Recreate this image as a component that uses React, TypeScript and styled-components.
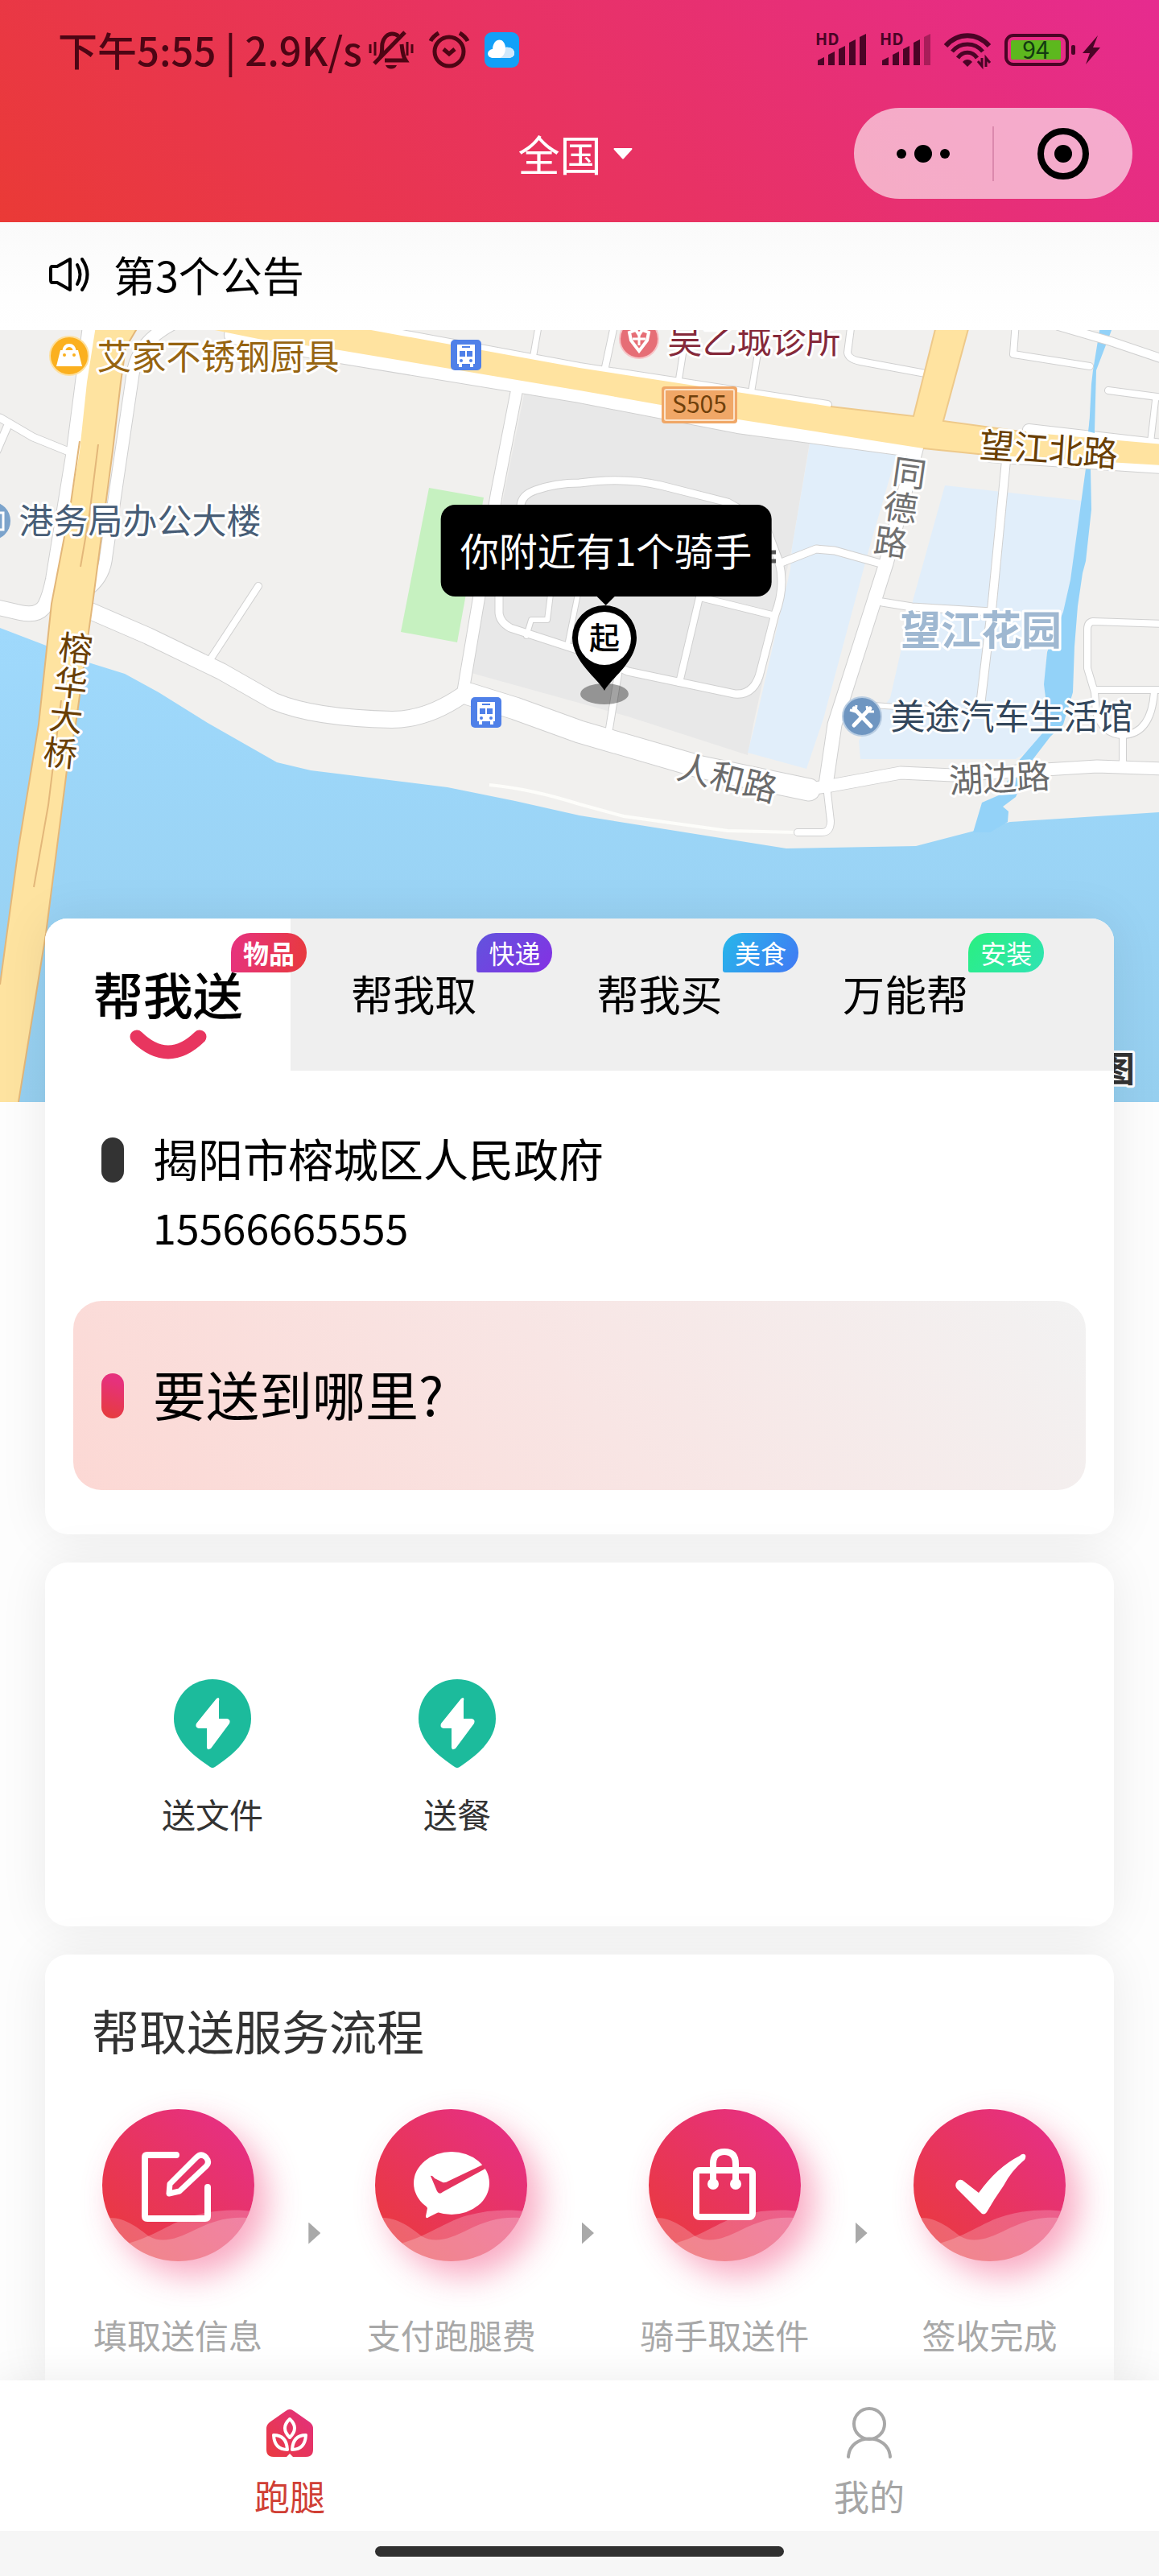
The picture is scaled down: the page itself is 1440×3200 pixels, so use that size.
import React, { useState } from "react";
import styled, { createGlobalStyle, css } from "styled-components";

const GlobalStyle = createGlobalStyle`
  *, *::before, *::after { box-sizing: border-box; }
  body {
    margin: 0;
    background: #fdfdfd;
    color: #000;
    font-family: "Noto Sans CJK SC", "Noto Sans", sans-serif;
  }
  button {
    margin: 0;
    padding: 0;
    border: 0;
    background: none;
    color: inherit;
    font: inherit;
    cursor: pointer;
  }
  h1, h2, p, ol, ul { margin: 0; padding: 0; list-style: none; font-weight: 400; }
  svg { display: block; flex: none; overflow: visible; }
`;

const brand = "linear-gradient(45deg, #ea3a36, #e62b8f)";

const Page = styled.div`
  display: flex;
  flex-direction: column;
  min-height: 100vh;
`;

/* ---------- header ---------- */

const Header = styled.header`
  background: ${brand};
`;

const StatusBar = styled.div`
  display: flex;
  align-items: center;
  justify-content: space-between;
  height: 124px;
  padding: 0 72px;
  color: #4d0514;
`;

const StatusGroup = styled.div<{ $gap: number }>`
  display: flex;
  align-items: center;
  gap: ${(p) => p.$gap}px;
`;

const Clock = styled.span`
  padding-bottom: 2px;
  font-size: 49px;
  line-height: 64px;
  font-weight: 500;
  white-space: nowrap;
`;

const TitleBar = styled.div`
  display: grid;
  grid-template-columns: 1fr auto 1fr;
  align-items: center;
  padding: 10px 33px 29px 22px;
`;

const CityButton = styled.button`
  grid-column: 2;
  display: flex;
  align-items: center;
  gap: 14px;
  color: #fff;
  font-size: 52px;
  line-height: 64px;
`;

const Capsule = styled.div`
  justify-self: end;
  display: flex;
  align-items: center;
  width: 346px;
  height: 113px;
  border-radius: 57px;
  background: rgba(255, 255, 255, 0.6);
`;

const CapsuleButton = styled.button`
  flex: 1;
  display: flex;
  justify-content: center;

  & + & {
    border-left: 2px solid rgba(160, 60, 110, 0.3);
    padding: 2px 0;
  }
`;

const Notice = styled.section`
  display: flex;
  align-items: center;
  gap: 26px;
  height: 134px;
  padding: 0 60px 4px;
  background: linear-gradient(#fafafa, #fefefe 70%, #fff);
  font-size: 52px;
  line-height: 64px;
`;

/* ---------- map ---------- */

const MapArea = styled.section`
  position: relative;
  height: 959px;
  overflow: hidden;
  background: #9ad5f9;

  & > svg {
    width: 100%;
    height: 100%;
    overflow: hidden;
  }
`;

const RiderTip = styled.div`
  position: absolute;
  left: calc(50% + 33px);
  top: 217px;
  transform: translateX(-50%);
  padding: 22px 24px 26px;
  border-radius: 18px;
  background: #000;
  color: #fff;
  font-size: 48px;
  line-height: 66px;
  white-space: nowrap;

  &::after {
    content: "";
    position: absolute;
    left: 50%;
    top: 100%;
    margin-left: -11px;
    border: 11px solid transparent;
    border-top-color: #000;
    border-bottom: 0;
  }
`;

/* ---------- cards ---------- */

const Content = styled.main`
  position: relative;
  flex: 1;
  display: flex;
  flex-direction: column;
  gap: 35px;
  margin-top: -228px;
  padding: 0 56px;
`;

const Card = styled.section<{ $grow?: boolean }>`
  border-radius: 28px;
  background: #fff;
  box-shadow: 0 0 60px rgba(0, 0, 0, 0.08);
  ${(p) =>
    p.$grow &&
    css`
      flex: 1;
      border-radius: 28px 28px 0 0;
    `}
`;

const Tabs = styled.div`
  display: flex;
  height: 189px;
  border-radius: 28px 28px 0 0;
  background: #efefef;
`;

const Tab = styled.button<{ $active: boolean }>`
  position: relative;
  flex: 0 0 23%;
  padding-bottom: 4px;
  font-size: ${(p) => (p.$active ? 62 : 52)}px;
  font-weight: ${(p) => (p.$active ? 500 : 400)};
  background: ${(p) => (p.$active ? "#fff" : "transparent")};

  &:first-child {
    border-top-left-radius: 28px;
  }
`;

const Badge = styled.span<{ $fill: string; $strong: boolean }>`
  position: absolute;
  left: 231px;
  top: 18px;
  z-index: 1;
  padding: 0 15px;
  border-radius: 24px 24px 24px 3px;
  background: ${(p) => p.$fill};
  color: #fff;
  font-size: 32px;
  line-height: 49px;
  font-weight: ${(p) => (p.$strong ? 700 : 400)};
  white-space: nowrap;
`;

const Smile = styled.svg`
  position: absolute;
  left: 50%;
  bottom: 14px;
  margin-left: -48px;
`;

const Addresses = styled.div`
  padding: 72px 35px 55px;
`;

const AddressRow = styled.div`
  display: grid;
  grid-template-columns: 28px 1fr;
  column-gap: 36px;
  align-items: center;
  padding: 0 35px;
`;

const Marker = styled.i<{ $fill: string }>`
  height: 56px;
  border-radius: 14px;
  background: ${(p) => p.$fill};
`;

const Place = styled.p`
  padding-bottom: 6px;
  font-size: 56px;
  line-height: 72px;
`;

const Phone = styled.p`
  grid-column: 2;
  margin-top: 12px;
  font-size: 52px;
  line-height: 64px;
`;

const Destination = styled.button`
  display: grid;
  grid-template-columns: 28px 1fr;
  column-gap: 36px;
  align-items: center;
  width: 100%;
  height: 235px;
  margin-top: 60px;
  padding: 0 35px;
  border-radius: 35px;
  background: linear-gradient(50deg, #fcd8d4, #f8e5e4 50%, #f2f2f2);
  font-size: 66px;
  line-height: 80px;
  text-align: left;
`;

const Question = styled.span`
  padding-bottom: 8px;
`;

const Services = styled.ul`
  display: grid;
  grid-template-columns: repeat(4, 1fr);
  padding: 145px 56px 112px;
`;

const ServiceButton = styled.button`
  display: flex;
  flex-direction: column;
  align-items: center;
  gap: 29px;
  width: 100%;
  color: #333;
  font-size: 42px;
  line-height: 56px;
`;

const FlowTitle = styled.h2`
  padding: 54px 58px 0;
  color: #333;
  font-size: 59px;
  line-height: 80px;
`;

const Steps = styled.ol`
  display: flex;
  align-items: center;
  justify-content: space-between;
  padding: 58px 60px 29px;
`;

const Step = styled.li`
  display: flex;
  flex-direction: column;
  align-items: center;
  gap: 63px;
  color: #a8a8a8;
  font-size: 42px;
  line-height: 56px;
`;

const StepDisc = styled.div`
  width: 189px;
  height: 189px;
  overflow: hidden;
  border-radius: 50%;
  background: linear-gradient(45deg, #ea3a3a 5%, #e63080 85%);
  box-shadow: 16px 18px 40px rgba(240, 50, 110, 0.42);
`;

const StepArrow = styled.li`
  width: 15px;
  height: 27px;
  background: #a9a9a9;
  clip-path: polygon(0 0, 100% 50%, 0 100%);
`;

/* ---------- bottom bar ---------- */

const BottomNav = styled.nav`
  position: relative;
  display: flex;
  background: #fff;
  box-shadow: 0 0 48px rgba(0, 0, 0, 0.08);
`;

const NavLink = styled.a<{ $active?: boolean }>`
  flex: 1;
  display: flex;
  flex-direction: column;
  align-items: center;
  gap: 18px;
  padding: 33px 0 16px;
  color: ${(p) => (p.$active ? "#d03f35" : "#a5a5a5")};
  font-size: 44px;
  line-height: 56px;
  text-decoration: none;
`;

const HomeArea = styled.div`
  position: relative;
  display: flex;
  justify-content: center;
  height: 56px;
  padding-top: 19px;
  background: #f6f6f6;
`;

const HomeBar = styled.div`
  width: 508px;
  height: 13px;
  border-radius: 7px;
  background: #303030;
`;

/* ---------- status icons ---------- */

const BellOff = () => (
  <svg width="56" height="48" viewBox="0 0 56 48" fill="none" stroke="currentColor" strokeWidth="4">
    <path d="M14 33C18 29 16 22 17 16C19 8 24 4 29 4C32 4 35 5 37 7" strokeWidth="5" />
    <path d="M41 17C42 24 42 31 46 37H20" strokeWidth="5" />
    <path d="M45 2L7 41" strokeWidth="5" />
    <path d="M2 17V28M8 14V31M48 14V31M54 17V28" strokeWidth="3" />
    <path d="M21 43H35C33 49 23 49 21 43Z" fill="currentColor" stroke="none" />
  </svg>
);

const Alarm = () => (
  <svg width="50" height="47" viewBox="0 0 50 47" fill="none" stroke="currentColor" strokeWidth="5">
    <circle cx="25" cy="25" r="18" />
    <path d="M2 12C4 8 7 5 12 2M48 12C46 8 43 5 38 2" />
    <path d="M18 22L25 28L32 22" />
  </svg>
);

const CloudApp = () => (
  <svg width="43" height="44" viewBox="0 0 43 44">
    <rect width="43" height="44" rx="9" fill="#12a0f8" />
    <path d="M11 32C2 32 2 22 10 21C11 6 25 6 26 19C39 17 41 32 30 32Z" fill="#fff" />
    <path d="M26 19C39 17 41 32 30 32H19C24 30 26 25 26 19Z" fill="#cfe8fb" />
  </svg>
);

const Signal = ({ weak }: { weak?: boolean }) => (
  <svg width="63" height="44" viewBox="0 0 63 44" fill="#4a0426">
    <text x="0" y="16" fontSize="20" fontWeight="700">HD</text>
    <path d="M3 41V35L11 31V41Z" />
    <path d="M16 41V28L24 24V41Z" />
    <path d="M29 41V21L37 17V41Z" />
    <path d="M42 41V13L50 9V41Z" />
    <path d="M55 41V6L63 2V41Z" opacity={weak ? 0.4 : 1} />
  </svg>
);

const Wifi = () => (
  <svg width="58" height="44" viewBox="0 0 58 44" fill="none" stroke="#4a0426" strokeWidth="5">
    <path d="M2 17C17 0 41 0 56 17" strokeWidth="6" />
    <path d="M10 24C20 12 38 12 48 24" />
    <path d="M17 32C23 23 35 23 41 32" />
    <path d="M29 43L23 37C26 33 32 33 35 37Z" fill="#4a0426" stroke="none" />
    <path d="M42 36L47 42V32M52 43V32L57 38" strokeWidth="3" />
  </svg>
);

const Battery = () => (
  <svg width="120" height="40" viewBox="0 0 120 40">
    <rect x="2" y="2" width="76" height="36" rx="9" fill="none" stroke="#4a0426" strokeWidth="4" />
    <rect x="8" y="8" width="62" height="24" rx="2" fill="#5db81e" />
    <rect x="83" y="14" width="5" height="12" rx="2" fill="#4a0426" />
    <text x="39" y="31" fontSize="30" textAnchor="middle" fill="#143a12">94</text>
    <path d="M116 2L97 24H106L101 38L119 17H110Z" fill="#4a0426" />
  </svg>
);

const Speaker = () => (
  <svg width="55" height="44" viewBox="0 0 55 44" fill="none" stroke="#000" strokeWidth="4" strokeLinejoin="round" strokeLinecap="round">
    <path d="M27 3V41L11 32H5Q3 32 3 29V15Q3 12 5 12H11Z" />
    <path d="M36 10Q43 22 36 34M42 3Q55 22 42 41" />
  </svg>
);

/* ---------- map drawing ---------- */

type Road = { d: string; w: number };

const roads: Road[] = [
  { d: "M0 519L41 543L83 560", w: 9 },
  { d: "M9 530L-4 560", w: 9 },
  { d: "M-5 754L25 761Q48 766 56 752Q62 740 66 720L92 560L112 405", w: 18 },
  { d: "M215 402Q170 425 165 465L147 587L132 690Q130 715 112 730", w: 15 },
  { d: "M321 728L262 818", w: 8 },
  { d: "M643 480L617 613L574 867", w: 14 },
  { d: "M670 400L663 440", w: 7 },
  { d: "M764 400L752 456", w: 8 },
  { d: "M850 430L843 474", w: 7 },
  { d: "M943 430L933 490", w: 7 },
  { d: "M1058 400L1053 438Q1054 446 1069 449L1150 464", w: 8 },
  { d: "M1262 400L1259 440L1354 455", w: 8 },
  { d: "M1377 485L1445 494", w: 8 },
  { d: "M1436 493L1430 545", w: 7 },
  { d: "M1315 405L1380 424L1445 446", w: 10 },
  { d: "M647 628Q648 615 665 609Q690 600 720 600Q775 592 821 603L904 624L950 650L968 698Q976 730 963 763L945 833Q938 864 913 862L780 834L720 808L634 780Q620 772 620 760V735", w: 9 },
  { d: "M870 742L959 764", w: 8 },
  { d: "M869 742L844 848", w: 8 },
  { d: "M968 700L1014 682L1037 684L1094 700", w: 9 },
  { d: "M684 738L680 770H660L654 790", w: 6 },
  { d: "M718 738L705 802", w: 6 },
  { d: "M768 837L757 905", w: 8 },
  { d: "M1250 572L1232 758L1217 885", w: 10 },
  { d: "M1096 748L1133 754L1232 760", w: 9 },
  { d: "M1070 875L1217 885", w: 6 },
  { d: "M1445 775L1358 772Q1351 773 1351 782V830L1360 860L1362 885Q1370 912 1395 913Q1430 912 1434 860", w: 8 },
  { d: "M1360 857H1445", w: 8 },
  { d: "M1395 913V950", w: 8 },
  { d: "M1028 985L1032 1020Q1032 1034 1021 1034H991", w: 8 },
  { d: "M1140 550L1101 700L1037 900L1026 975", w: 17 },
  { d: "M110 758L184 790L275 834L340 871Q390 892 487 894Q530 894 574 864", w: 20 },
  { d: "M582 862L640 880L720 909L871 953L1005 981", w: 27 },
  { d: "M1000 981L1032 976L1119 960L1184 963L1363 952L1445 955", w: 15 },
  { d: "M290 416L422 440L720 489L917 527L1125 555", w: 22 },
  { d: "M440 404L720 456L1028 503", w: 10 },
  { d: "M1278 534L1445 553", w: 14 },
  { d: "M1230 568L1445 582", w: 12 },
];

const Bus = ({ x, y }: { x: number; y: number }) => (
  <g transform={`translate(${x - 19} ${y - 19})`}>
    <rect width="38" height="38" rx="5" fill="#4f80e8" />
    <path d="M8 6H30V30H28V34H24V30H14V34H10V30H8Z" fill="#fff" />
    <path d="M14 9H24" stroke="#4f80e8" strokeWidth="2" />
    <path d="M11 14H18V21H11ZM20 14H27V21H20Z" fill="#4f80e8" />
    <circle cx="13" cy="26" r="2" fill="#4f80e8" />
    <circle cx="25" cy="26" r="2" fill="#4f80e8" />
  </g>
);

type Label = { t: string; x: number; y: number; c: string; r?: number; s?: number; b?: boolean };

const labels: Label[] = [
  { t: "艾家不锈钢厨具", x: 271, y: 443, c: "#966411", s: 43 },
  { t: "港务局办公大楼", x: 174, y: 647, c: "#475d76", s: 43 },
  { t: "吴乙城诊所", x: 937, y: 423, c: "#85293a", s: 43 },
  { t: "望江北路", x: 1303, y: 558, c: "#6a3f04", r: 4, s: 43 },
  { t: "同", x: 1130, y: 587, c: "#707070", r: 8 },
  { t: "德", x: 1119, y: 630, c: "#707070", r: 8 },
  { t: "路", x: 1107, y: 673, c: "#707070", r: 8 },
  { t: "望江花园", x: 1219, y: 782, c: "#9fb8d1", s: 50, b: true },
  { t: "美途汽车生活馆", x: 1257, y: 890, c: "#33475c", s: 43 },
  { t: "湖边路", x: 1242, y: 966, c: "#6b6b6b", r: -3 },
  { t: "人和路", x: 904, y: 966, c: "#6b6b6b", r: 14 },
  { t: "榕", x: 94, y: 805, c: "#6a3f04", r: 6 },
  { t: "华", x: 88, y: 848, c: "#6a3f04", r: 6 },
  { t: "大", x: 82, y: 891, c: "#6a3f04", r: 6 },
  { t: "桥", x: 75, y: 935, c: "#6a3f04", r: 6 },
  { t: "图", x: 1388, y: 1328, c: "#333", s: 44, b: true },
];

const CityMap = () => (
  <svg viewBox="0 410 1440 959" preserveAspectRatio="xMidYMid slice">
    <defs>
      <linearGradient id="water" x1="0" y1="0" x2="0" y2="1">
        <stop offset="0" stopColor="#9fd9fc" />
        <stop offset="1" stopColor="#96cfef" />
      </linearGradient>
    </defs>
    <rect x="-200" y="410" width="1840" height="959" fill="#f1f0ee" />
    <path d="M-200 780H0L60 803L110 823L155 837L197 860L258 898L344 947L386 957L556 978L640 995L720 1013L977 1054L1138 1051L1211 1032L1255 1021L1440 1009H1640V1369H-200Z" fill="url(#water)" />
    <path d="M652 485L720 500L1007 543L984 680L936 900L929 938L780 890L582 835Z" fill="#e8e8e8" />
    <path d="M1008 540L1116 557L1078 688L1023 893L1002 955L929 935L938 900L982 707L984 680Z" fill="#e1eefa" />
    <path d="M1174 603L1345 622V640L1322 760L1300 810L1297 880L1303 915L1262 943H1069L1067 920L1106 867L1119 810L1135 743Z" fill="#e1eefa" />
    <path d="M533 606L601 618L568 798L498 785Z" fill="#c6f1c0" />
    <path d="M1367 405H1383L1362 460L1360 535L1355 582L1356 633L1349 697L1345 712L1339 753L1335 803L1333 860L1321 900L1305 915L1282 945L1262 990L1246 1002L1253 1008L1252 1021L1230 1034L1209 1034L1220 997L1243 987L1264 947L1296 910L1303 900L1297 850L1301 810L1321 760L1330 720L1342 633L1349 582L1353 535L1356 477L1358 460Z" fill="#93d2f8" />
    <path d="M608 975Q660 980 720 999L775 1014L904 1032L991 1034" fill="none" stroke="#fdfdfa" strokeWidth="4" />
    <g fill="none" stroke="#d0d0d0" strokeLinejoin="round" strokeLinecap="round">
      {roads.map((r) => <path key={r.d} d={r.d} strokeWidth={r.w + 2} />)}
    </g>
    <g fill="none" stroke="#fff" strokeLinejoin="round" strokeLinecap="round">
      {roads.map((r) => <path key={r.d} d={r.d} strokeWidth={r.w} />)}
    </g>
    <path d="M257 408H450L720 457L1032 505L1135 517L1163 405H1204L1172 523L1275 537L1445 552V578L1225 565L1147 557L917 521L821 503L720 485L422 435L321 421Z" fill="#ffe3a0" />
    <path d="M1032 505L1135 517L1163 405M1204 405L1172 523L1275 537M1147 557L1225 565" fill="none" stroke="#eec98a" strokeWidth="2" />
    <path d="M119 405H172L156 432L150 475L140 560L115 750L94 900L83 957L57 1160L23 1369H-20L0 1223L23 1053L48 900L64 750L88 625L99 560L108 475Z" fill="#fee3a0" />
    <path d="M172 405L156 432L150 475L140 560L115 750L94 900L83 957L57 1160L23 1369M0 1223L23 1053L48 900L64 750L88 625L99 548M122 552L111 640L100 704M76 870L60 1000L42 1102" fill="none" stroke="#e3b77a" strokeWidth="2" />
    <path d="M1354 520L1360 520L1360 538L1352 536Z" fill="#93d2f8" />

    <rect x="822" y="480" width="94" height="46" rx="4" fill="#f0a767" />
    <rect x="826" y="484" width="86" height="38" rx="2" fill="none" stroke="#fbe3cb" strokeWidth="2" />
    <text x="869" y="513" fontSize="30" textAnchor="middle" fill="#6f400b">S505</text>
    <Bus x={579} y={441} />
    <Bus x={604} y={885} />

    <circle cx="86" cy="442" r="24" fill="#fbb01f" stroke="#fde0a0" strokeWidth="2" />
    <path d="M75 435H97L102 455H70Z" fill="#fff" />
    <path d="M79 437Q80 429 86 429Q92 429 93 437" fill="none" stroke="#fff" strokeWidth="4" />
    <circle cx="80" cy="441" r="2" fill="#fbb01f" />
    <circle cx="92" cy="441" r="2" fill="#fbb01f" />

    <circle cx="-11" cy="647" r="24" fill="#7ba3cb" />
    <path d="M-10 637H4V658H-10" fill="none" stroke="#fff" strokeWidth="3" />

    <circle cx="794" cy="421" r="24" fill="#e66e76" stroke="#f6c3c6" strokeWidth="2" />
    <path d="M782 413L790 410L794 416L798 410L806 413L804 423L794 436L784 423Z" fill="none" stroke="#fff" strokeWidth="4" />
    <path d="M794 413V429M786 421H802" stroke="#fff" strokeWidth="3" />

    <circle cx="1071" cy="890" r="24" fill="#6f96c1" stroke="#b9cde2" strokeWidth="2" />
    <path d="M1061 880L1082 902M1081 880L1061 901" stroke="#fff" strokeWidth="5" strokeLinecap="round" />
    <path d="M1056 882L1063 884L1064 876M1077 877L1078 884L1086 884" fill="none" stroke="#fff" strokeWidth="3" />

    {labels.map((l) => {
      const size = l.s ?? 42;
      return (
        <text
          key={l.t + l.x}
          x={l.x}
          y={l.y + Math.round(size * 0.37)}
          fontSize={size}
          fontWeight={l.b ? 700 : 400}
          textAnchor="middle"
          fill={l.c}
          stroke="#fff"
          strokeWidth="6"
          strokeLinejoin="round"
          paintOrder="stroke"
          transform={l.r ? `rotate(${l.r} ${l.x} ${l.y})` : undefined}
        >
          {l.t}
        </text>
      );
    })}

    <path d="M956 686H964M956 697H964" stroke="#555" strokeWidth="5" />
    <ellipse cx="751" cy="862" rx="30" ry="13" fill="#000" opacity="0.36" />
    <path d="M751 858C744 844 711 822 711 792A40 40 0 0 1 791 792C791 822 758 844 751 858Z" fill="#000" />
    <circle cx="751" cy="793" r="33" fill="#fff" />
    <text x="751" y="806" fontSize="38" fontWeight="500" textAnchor="middle">起</text>
  </svg>
);

/* ---------- content icons ---------- */

const BoltPin = () => (
  <svg width="96" height="110" viewBox="0 0 96 110">
    <path d="M48 0C75 0 96 21 96 49C96 77 70 96 51 109Q48 111 45 109C26 96 0 77 0 49C0 21 21 0 48 0Z" fill="#1cbb9c" />
    <path d="M55 23Q57 23 56 27V49H66Q71 50 69 55L46 86Q41 89 41 84V61H31Q26 60 28 55L53 24Z" fill="#fff" />
  </svg>
);

const stepGlyphs: Record<string, React.ReactNode> = {
  edit: (
    <g fill="none" stroke="#fff" strokeWidth="8" strokeLinecap="round" strokeLinejoin="round">
      <path d="M92 57H56Q53 57 53 60V133Q53 136 56 136H128Q131 136 131 133V97" />
      <path d="M84 93L117 60Q123 54 129 60Q134 66 129 71L96 102L83 105Z" strokeWidth="7" />
    </g>
  ),
  pay: (
    <g>
      <ellipse cx="95" cy="92" rx="47" ry="39" fill="#fff" />
      <path d="M58 112L65 123L63 133Q63 137 67 134L79 128Z" fill="#fff" />
      <path d="M69 83Q71 82 74 86L84 91Q87 92 92 89L134 69L137 74L84 103Q80 107 77 102Z" fill="#e5335f" />
    </g>
  ),
  bag: (
    <g fill="none" stroke="#fff" strokeWidth="8" strokeLinejoin="round">
      <rect x="59" y="76" width="70" height="58" rx="4" />
      <path d="M80 92V68Q80 53 94 53Q108 53 108 68V92" />
      <circle cx="80" cy="93" r="7" fill="#fff" stroke="none" />
      <circle cx="108" cy="93" r="7" fill="#fff" stroke="none" />
    </g>
  ),
  done: (
    <path d="M132 58Q136 54 139 57Q140 60 138 63Q122 76 112 95Q100 112 91 128Q87 133 83 128L54 99Q50 94 55 89Q59 86 63 90L81 104Q104 72 132 58Z" fill="#fff" />
  ),
};

const StepIcon = ({ name }: { name: string }) => (
  <StepDisc>
    <svg width="189" height="189" viewBox="0 0 189 189">
      <path d="M0 136C25 131 45 148 58 158C75 168 95 160 115 150C140 138 160 132 189 136V189H0Z" fill="#fff" opacity="0.22" />
      <path d="M20 170C65 160 85 140 115 132C140 125 165 124 189 127V189H0V172Z" fill="#fff" opacity="0.22" />
      {stepGlyphs[name]}
    </svg>
  </StepDisc>
);

const HouseIcon = () => (
  <svg width="60" height="64" viewBox="0 0 60 64">
    <defs>
      <linearGradient id="house" x1="0" y1="1" x2="1" y2="0">
        <stop offset="0" stopColor="#ea3a40" />
        <stop offset="1" stopColor="#e23080" />
      </linearGradient>
    </defs>
    <path d="M25 5Q30 1 35 5L55 19Q59 22 59 27V53Q59 62 50 62H34L30 58L26 62H10Q1 62 1 53V27Q1 22 5 19Z" fill="url(#house)" />
    <g fill="none" stroke="#fff" strokeWidth="4" strokeLinejoin="round">
      <path d="M30 15Q42 26 30 38Q18 26 30 15Z" />
      <path d="M10 35Q26 35 27 53Q11 53 10 35Z" />
      <path d="M50 35Q34 35 33 53Q49 53 50 35Z" />
    </g>
  </svg>
);

const UserIcon = () => (
  <svg width="60" height="64" viewBox="0 0 60 64" fill="none" stroke="#a8a8a8" strokeWidth="4" strokeLinecap="round">
    <circle cx="30" cy="21" r="19" />
    <path d="M4 62C6 32 54 32 56 62" />
  </svg>
);

/* ---------- data ---------- */

const tabs = [
  { name: "帮我送", badge: "物品", fill: "linear-gradient(100deg, #e63280, #e83a3c)" },
  { name: "帮我取", badge: "快递", fill: "linear-gradient(135deg, #6154dd, #8530e4)" },
  { name: "帮我买", badge: "美食", fill: "linear-gradient(120deg, #27b7ea, #4178f4)" },
  { name: "万能帮", badge: "安装", fill: "linear-gradient(135deg, #2af07f, #2fe3b4)" },
];

const services = ["送文件", "送餐"];

const steps = [
  { icon: "edit", text: "填取送信息" },
  { icon: "pay", text: "支付跑腿费" },
  { icon: "bag", text: "骑手取送件" },
  { icon: "done", text: "签收完成" },
];

export default function App() {
  const [active, setActive] = useState(0);

  return (
    <Page>
      <GlobalStyle />
      <Header>
        <StatusBar>
          <StatusGroup $gap={8}>
            <Clock>下午5:55 | 2.9K/s</Clock>
            <StatusGroup $gap={19}>
              <BellOff />
              <Alarm />
              <CloudApp />
            </StatusGroup>
          </StatusGroup>
          <StatusGroup $gap={17}>
            <Signal />
            <Signal weak />
            <Wifi />
            <Battery />
          </StatusGroup>
        </StatusBar>
        <TitleBar>
          <CityButton type="button">
            全国
            <svg width="24" height="14" viewBox="0 0 24 14" fill="#fff">
              <path d="M1 0H23Q24 1 23 2L13 13Q12 14 11 13L1 2Q0 1 1 0Z" />
            </svg>
          </CityButton>
          <Capsule>
            <CapsuleButton type="button" aria-label="更多">
              <svg width="68" height="24" viewBox="0 0 68 24">
                <circle cx="7" cy="12" r="6" />
                <circle cx="34" cy="12" r="11" />
                <circle cx="61" cy="12" r="6" />
              </svg>
            </CapsuleButton>
            <CapsuleButton type="button" aria-label="关闭">
              <svg width="64" height="64" viewBox="0 0 64 64">
                <circle cx="32" cy="32" r="28" fill="none" stroke="#000" strokeWidth="8" />
                <circle cx="32" cy="32" r="11" />
              </svg>
            </CapsuleButton>
          </Capsule>
        </TitleBar>
      </Header>

      <Notice>
        <Speaker />
        <p>第3个公告</p>
      </Notice>

      <MapArea>
        <CityMap />
        <RiderTip>你附近有1个骑手</RiderTip>
      </MapArea>

      <Content>
        <Card>
          <Tabs>
            {tabs.map((tab, i) => (
              <Tab key={tab.name} type="button" $active={i === active} onClick={() => setActive(i)}>
                {tab.name}
                <Badge $fill={tab.fill} $strong={i === active}>{tab.badge}</Badge>
                {i === active && (
                  <Smile width="96" height="38" viewBox="0 0 96 38">
                    <path d="M9 10Q48 48 87 10" fill="none" stroke="#e8355f" strokeWidth="17" strokeLinecap="round" />
                  </Smile>
                )}
              </Tab>
            ))}
          </Tabs>
          <Addresses>
            <AddressRow>
              <Marker $fill="#333" />
              <Place>揭阳市榕城区人民政府</Place>
              <Phone>15566665555</Phone>
            </AddressRow>
            <Destination type="button">
              <Marker $fill="linear-gradient(20deg, #e63d38, #e6317c 80%)" />
              <Question>要送到哪里?</Question>
            </Destination>
          </Addresses>
        </Card>

        <Card>
          <Services>
            {services.map((name) => (
              <li key={name}>
                <ServiceButton type="button">
                  <BoltPin />
                  {name}
                </ServiceButton>
              </li>
            ))}
          </Services>
        </Card>

        <Card $grow>
          <FlowTitle>帮取送服务流程</FlowTitle>
          <Steps>
            {steps.map((s, i) => (
              <React.Fragment key={s.text}>
                {i > 0 && <StepArrow aria-hidden="true" />}
                <Step>
                  <StepIcon name={s.icon} />
                  {s.text}
                </Step>
              </React.Fragment>
            ))}
          </Steps>
        </Card>
      </Content>

      <BottomNav>
        <NavLink href="#home" $active>
          <HouseIcon />
          跑腿
        </NavLink>
        <NavLink href="#me">
          <UserIcon />
          我的
        </NavLink>
      </BottomNav>
      <HomeArea>
        <HomeBar />
      </HomeArea>
    </Page>
  );
}
